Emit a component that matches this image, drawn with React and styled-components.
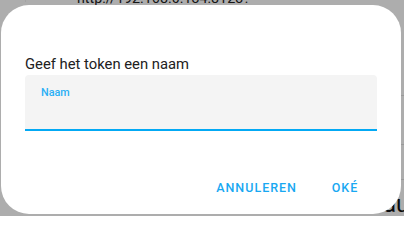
import React from "react";
import styled, { createGlobalStyle } from "styled-components";

const GlobalStyle = createGlobalStyle`
  html, body {
    margin: 0;
    padding: 0;
    width: 404px;
    height: 216px;
    overflow: hidden;
    font-family: Roboto, "Noto Sans", sans-serif;
  }
`;

// de pagina achter de dialoog
const Page = styled.div`
  position: relative;
  width: 404px;
  height: 216px;
  background: #fff;
  overflow: hidden;
`;

const PageHeader = styled.div`
  margin-left: 25px;
  height: 12px;
  border-left: 1px solid #f0f0f0;
  padding-left: 51px;
  margin-top: -10px;
  font-family: Roboto, sans-serif;
  font-size: 14.3px;
  line-height: 16px;
  color: #222;
  white-space: nowrap;
`;

const SideList = styled.div`
  position: absolute;
  left: 400px;
  top: 0;
  width: 10px;
  display: flex;
  flex-direction: column;
`;

const SideRow = styled.div`
  height: ${(p) => p.$h}px;
  border-bottom: 1px solid #e4e4e4;
`;

const Corner = styled.div`
  position: absolute;
  left: 383px;
  top: 190px;
  font-family: Roboto, sans-serif;
  font-size: 24px;
  line-height: 28px;
  color: #111;
`;

const Scrim = styled.div`
  position: absolute;
  inset: 0;
  background: rgba(0, 0, 0, 0.32);
`;

const Dialog = styled.div`
  position: absolute;
  left: 1px;
  top: 5px;
  width: 400px;
  height: 209px;
  box-sizing: border-box;
  background: #fff;
  border-radius: 28px;
  padding: 48px 24px 0 24px;
  display: flex;
  flex-direction: column;
`;

const Title = styled.div`
  font-size: 14.8px;
  line-height: 22px;
  color: #212121;
`;

const Field = styled.div`
  height: 56px;
  box-sizing: border-box;
  background: #f4f4f4;
  border-radius: 4px 4px 0 0;
  border-bottom: 2px solid #03a9f4;
  padding: 10px 16px 0 16px;
`;

const Label = styled.div`
  font-size: 10.8px;
  line-height: 16px;
  font-weight: 500;
  color: #29aff5;
`;

const Actions = styled.div`
  margin-top: 38px;
  display: flex;
  justify-content: flex-end;
  gap: 8px;
`;

const Button = styled.button`
  height: 36px;
  min-width: 64px;
  padding: 0 8px;
  border: none;
  background: transparent;
  font-family: Roboto, sans-serif;
  font-size: 12.5px;
  font-weight: 500;
  letter-spacing: 1px;
  text-transform: uppercase;
  color: #18a8f2;
  cursor: pointer;
`;

export default function App() {
  return (
    <>
      <GlobalStyle />
      <Page>
        <PageHeader>http://192.168.0.134:8123?</PageHeader>
        <SideList>
          <SideRow $h={95} />
          <SideRow $h={48} />
          <SideRow $h={34} />
        </SideList>
        <Corner>au</Corner>
        <Scrim />
        <Dialog>
          <Title>Geef het token een naam</Title>
          <Field>
            <Label>Naam</Label>
          </Field>
          <Actions>
            <Button>Annuleren</Button>
            <Button>Oké</Button>
          </Actions>
        </Dialog>
      </Page>
    </>
  );
}
